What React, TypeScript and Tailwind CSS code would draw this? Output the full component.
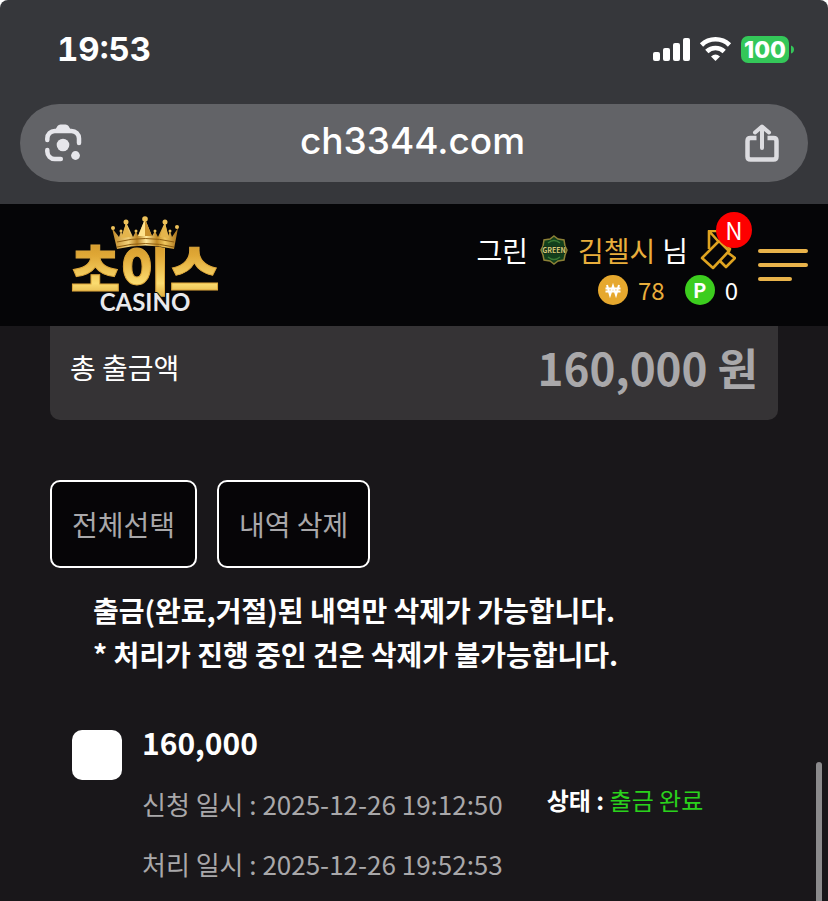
import React from "react";

function StatusIcons() {
  return (
    <svg width="142" height="28" viewBox="653 36 142 28" role="img" aria-label="신호, 와이파이, 배터리 100%">
      <g fill="#fff">
        <rect x="653" y="52" width="7" height="9" rx="2" />
        <rect x="663" y="48" width="7" height="13" rx="2" />
        <rect x="673" y="43" width="7" height="18" rx="2" />
        <rect x="683" y="38" width="7" height="23" rx="2" />
        <path d="M711 56.500Q715.500 52.500 720 56.500L715.500 61Z" />
      </g>
      <g fill="none" stroke="#fff" strokeWidth="4.600">
        <path d="M701.500 45a20 20 0 0 1 28 0" />
        <path d="M706.800 51.500a12.500 12.500 0 0 1 17.400 0" />
      </g>
      <rect x="741" y="36" width="48" height="27" rx="7" fill="#34c759" />
      <path d="M791 45.500q3 1 3 4t-3 4z" fill="#34c759" />
      <text x="765" y="58" textAnchor="middle" fill="#fff" fontSize="23" fontWeight="800" fontFamily="Inter, sans-serif">100</text>
    </svg>
  );
}

function LensIcon() {
  return (
    <svg width="38" height="40" viewBox="44 123 38 40" aria-hidden="true">
      <g fill="none" stroke="#e6e6eb" strokeWidth="4.500" strokeLinecap="round">
        <path d="M47.300 140v-1.500a7.500 7.500 0 0 1 7.500-7.500h16.700a7.500 7.500 0 0 1 7.500 7.500v4.500" />
        <path d="M47.300 150v1.500a7.500 7.500 0 0 0 7.500 7.500h6" />
      </g>
      <path d="M54 132l3.500-6q1-1.500 3-1.500h5q2 0 3 1.500l3.500 6z" fill="#e6e6eb" />
      <circle cx="63" cy="145" r="6.300" fill="#e6e6eb" />
      <circle cx="75.500" cy="155.500" r="4.400" fill="#e6e6eb" />
    </svg>
  );
}

function ShareIcon() {
  return (
    <svg width="38" height="40" viewBox="743 123 38 40" fill="none" stroke="#dcdce0" strokeWidth="4.500" strokeLinejoin="round" aria-hidden="true">
      <path d="M756.500 138h-6q-3 0-3 3v15.500q0 3 3 3h23q3 0 3-3V141q0-3-3-3h-6" />
      <path d="M762 148V127M755 132.500l7-6 7 6" strokeWidth="4" strokeLinecap="round" />
    </svg>
  );
}

function Logo() {
  return (
    <svg width="150" height="102" viewBox="70 212 150 102" className="overflow-visible" role="img" aria-label="초이스 CASINO">
      <defs>
        <linearGradient id="gold" x1="0" y1="0" x2="0" y2="1">
          <stop offset="0" stopColor="#c48a22" />
          <stop offset="0.350" stopColor="#e0a836" />
          <stop offset="0.700" stopColor="#fbdc70" />
          <stop offset="1" stopColor="#c88a20" />
        </linearGradient>
        <linearGradient id="crown" x1="0" y1="0" x2="1" y2="0">
          <stop offset="0" stopColor="#c08828" />
          <stop offset="0.250" stopColor="#f3d27a" />
          <stop offset="0.380" stopColor="#b98224" />
          <stop offset="0.520" stopColor="#ffe79a" />
          <stop offset="0.680" stopColor="#c08824" />
          <stop offset="0.800" stopColor="#f0c75e" />
          <stop offset="1" stopColor="#a87018" />
        </linearGradient>
      </defs>
      <text x="145" y="291" textAnchor="middle" fontSize="54" fontWeight="900" fontFamily="'Noto Sans CJK KR', sans-serif" fill="url(#gold)" stroke="#dca63a" strokeWidth="1">초이스</text>
      <path d="M117 249L112 228L119 237L121 231L123 236L126 222L133 237L136 231L138 236L145 219L152 236L155 231L158 237L165 222L168 236L170 231L172 237L178 228L174 249Q145 242 117 249Z" fill="url(#crown)" stroke="#050507" strokeWidth="1" paintOrder="stroke" />
      <path d="M117 242Q145 235 174 242M117 247Q145 240 174 247" fill="none" stroke="#8e5d10" strokeWidth="1" />
      <path d="M126 223l-5 15 10-1zM165 223l-5 14 9 1z" fill="#e5b54c" />
      <path d="M145 219l-7 17h7z" fill="#ffe28c" />
      <path d="M145 219l7 17h-7z" fill="#c9902c" />
      <g fill="#eec25a">
        <circle cx="113" cy="228" r="2" />
        <circle cx="126" cy="222" r="2.500" />
        <circle cx="145" cy="219" r="2.800" />
        <circle cx="165" cy="222" r="2.500" />
        <circle cx="177" cy="227" r="2" />
        <circle cx="121" cy="231" r="1.500" />
        <circle cx="136" cy="231" r="1.500" />
        <circle cx="155" cy="231" r="1.500" />
        <circle cx="170" cy="231" r="1.500" />
      </g>
      <text x="145" y="311" textAnchor="middle" fontSize="24" fontWeight="700" fontFamily="Lato, sans-serif" fill="#e9e9ec" stroke="#050507" strokeWidth="2" paintOrder="stroke">CASINO</text>
    </svg>
  );
}

function GreenBadge() {
  return (
    <svg width="28" height="30" viewBox="0 0 28 30" role="img" aria-label="GREEN">
      <path d="M14 1l4 3 6 1 1 6 2 4-2 5-1 5-6 1-4 3-4-3-6-1-1-5-2-5 2-4 1-6 6-1z" fill="#123f1c" stroke="#8c8136" strokeWidth="1.500" />
      <path d="M8 8q6-5 12 0M8 22q6 5 12 0" fill="none" stroke="#3b7a35" strokeWidth="1.500" />
      <path d="M3 11h22v8H3z" fill="#15351a" />
      <text x="14" y="18" textAnchor="middle" fontSize="7" fontWeight="700" fontFamily="'Noto Sans CJK KR', sans-serif" fill="#d8c878">GREEN</text>
    </svg>
  );
}

function MessageIcon() {
  return (
    <svg width="36" height="40" viewBox="700 230 36 40" fill="none" stroke="#dea320" strokeWidth="2.600" strokeLinejoin="round" aria-hidden="true">
      <path d="M709 249V231h18M709 231l9 10" />
      <path d="M702 258l17-17 10 10-16 17z" />
      <path d="M727 252l8 6-9 9-6-6M724 241l6 8-1 2" />
    </svg>
  );
}

function WonCoin() {
  return (
    <svg width="30" height="30" viewBox="0 0 30 30" aria-label="보유금" role="img">
      <circle cx="15" cy="15" r="15" fill="#e6a82e" />
      <path d="M9 10l3 10 3-9 3 9 3-10M7.500 13.500h15M7.500 16.500h15" fill="none" stroke="#fff" strokeWidth="2" />
    </svg>
  );
}

type RecordRow = { amount: string; requested: string; processed: string; status: string };

const records: RecordRow[] = [
  { amount: "160,000", requested: "2025-12-26 19:12:50", processed: "2025-12-26 19:52:53", status: "출금 완료" },
];

function ActionButton({ children }: { children: React.ReactNode }) {
  return (
    <button className="h-[88px] rounded-[10px] border-2 border-white bg-[#060507] px-5 text-[28px] text-[#a9a8aa]">
      {children}
    </button>
  );
}

export default function App() {
  return (
    <div className="relative min-h-screen bg-[#19171a] font-['Noto_Sans_CJK_KR','Noto_Sans',sans-serif] text-white">
      <div className="bg-white">
        <div className="rounded-t-lg bg-[#36373b] px-5 pb-[22px]">
          <div className="flex h-[104px] items-center justify-between pr-[13px] pb-1 pl-[37px]">
            <time className="font-[Inter,sans-serif] text-[33px] font-bold tabular-nums">19:53</time>
            <StatusIcons />
          </div>
          <div className="flex h-[78px] items-center justify-between rounded-full bg-[#626367] pr-[27px] pl-6">
            <button aria-label="이미지 검색"><LensIcon /></button>
            <span className="pb-1 font-[Inter,sans-serif] text-[37px] font-medium">ch3344.com</span>
            <button aria-label="공유"><ShareIcon /></button>
          </div>
        </div>
      </div>

      <header className="flex h-[122px] items-start justify-between bg-[#050507] pt-2 pr-5 pl-[70px]">
        <a href="#home"><Logo /></a>
        <div className="flex items-center gap-5 pt-[18px]">
          <div className="flex flex-col items-end">
            <div className="flex h-10 items-center text-[28px] leading-10">
              <span>그린</span>
              <span className="mr-[10px] ml-3"><GreenBadge /></span>
              <span className="text-[#e9ae3c]">김첼시</span>
              <span className="ml-[7px]">님</span>
              <a href="#messages" aria-label="새 쪽지" className="relative mr-0.5 ml-3 block">
                <MessageIcon />
                <span className="absolute -top-[18px] left-4 flex size-9 items-center justify-center rounded-full bg-[#fe0000] text-[24px] leading-9">N</span>
              </a>
            </div>
            <div className="flex h-10 items-center text-[24px] leading-10">
              <WonCoin />
              <span className="ml-[10px] text-[#e9ae3c]">78</span>
              <span className="ml-5 flex size-[30px] items-center justify-center rounded-full bg-[#3ccd1e] text-[20px] font-bold">P</span>
              <span className="ml-[10px]">0</span>
            </div>
          </div>
          <button aria-label="메뉴" className="flex w-[50px] flex-col gap-[10px] pb-[10px]">
            <span className="h-1 w-full rounded-full bg-[#e9b34a]" />
            <span className="h-1 w-full rounded-full bg-[#e9b34a]" />
            <span className="h-1 w-[34px] rounded-full bg-[#e9b34a]" />
          </button>
        </div>
      </header>

      <main className="px-[50px]">
        <section className="flex h-[94px] items-center justify-between rounded-b-[10px] bg-[#353335] px-5 pb-3">
          <span className="text-[28px]">총 출금액</span>
          <strong className="text-[44px] font-bold text-[#a9a8aa]">160,000 원</strong>
        </section>

        <div className="mt-[60px] flex gap-5">
          <ActionButton>전체선택</ActionButton>
          <ActionButton>내역 삭제</ActionButton>
        </div>

        <p className="mt-5 pl-[43px] text-[28px] leading-[44px] font-bold">
          출금(완료,거절)된 내역만 삭제가 가능합니다.
          <br />* 처리가 진행 중인 건은 삭제가 불가능합니다.
        </p>

        <ul className="mt-[44px] pl-[22px]">
          {records.map((r) => (
            <li key={r.requested} className="flex items-start">
              <input type="checkbox" aria-label={`${r.amount} 선택`} className="mt-[10px] size-[50px] shrink-0 appearance-none rounded-[10px] bg-white checked:bg-[#e9ae3c]" />
              <div className="ml-5">
                <p className="mb-[10px] text-[30px] leading-[44px] font-bold">{r.amount}</p>
                <p className="text-[26px] leading-[60px] text-[#a9a8aa]">신청 일시 : {r.requested}</p>
                <p className="text-[26px] leading-[60px] text-[#a9a8aa]">처리 일시 : {r.processed}</p>
              </div>
              <p className="mt-[50px] ml-11 text-[24px] leading-[60px]">
                <strong className="font-bold">상태 :</strong> <span className="text-[#2ad11c]">{r.status}</span>
              </p>
            </li>
          ))}
        </ul>
      </main>

      <div className="absolute right-1.5 bottom-0 h-[139px] w-1.5 rounded-t-full bg-[#8b8a8c]" aria-hidden="true" />
    </div>
  );
}
